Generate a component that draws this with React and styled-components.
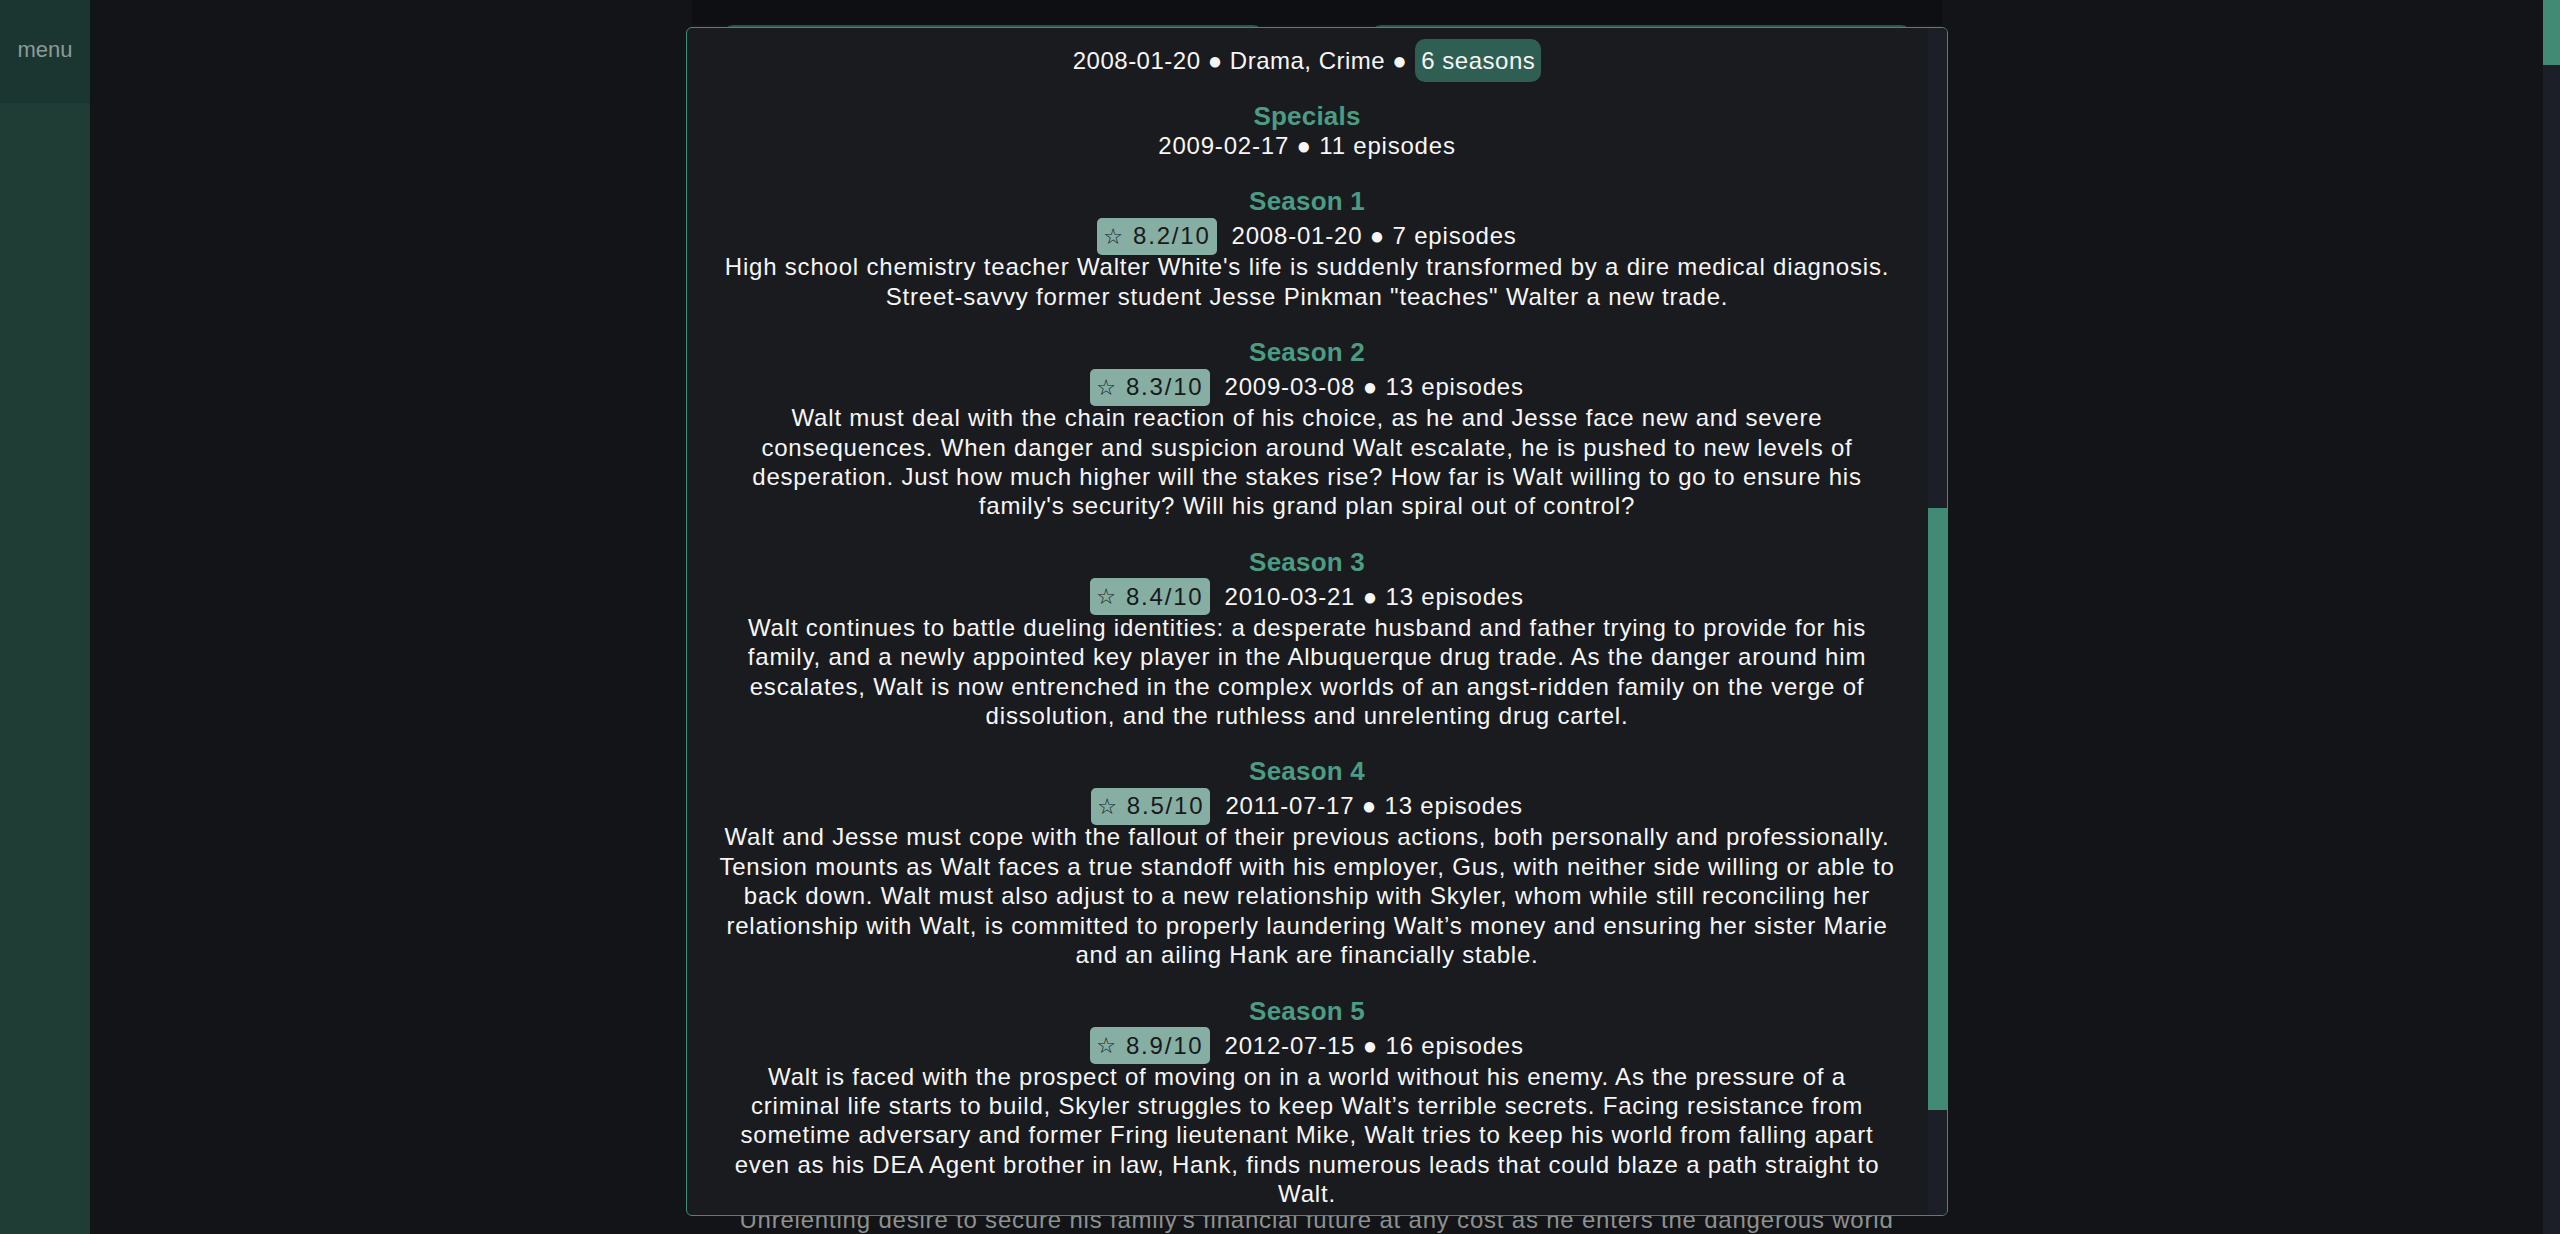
import React from 'react';
import styled, { createGlobalStyle } from 'styled-components';

const FONT = `"Century Gothic", "Liberation Sans", Arial, "DejaVu Sans", sans-serif`;

const GlobalStyle = createGlobalStyle`
  html, body {
    margin: 0;
    padding: 0;
    height: 100%;
    overflow: hidden;
    background: #131418;
    font-family: ${FONT};
    color: #f4f4f4;
  }
  #root {
    height: 100%;
  }
`;

const Page = styled.div`
  display: flex;
  height: 100vh;
`;

const Sidebar = styled.nav`
  width: 90px;
  flex-shrink: 0;
  background: #1f3c35;
  display: flex;
  flex-direction: column;
`;

const MenuButton = styled.div`
  height: 103px;
  box-sizing: border-box;
  padding-top: 39px;
  background: #1b3630;
  color: #8c9b98;
  font-size: 22px;
  line-height: 22px;
  text-align: center;
`;

const Main = styled.main`
  flex: 1;
  display: flex;
  justify-content: center;
  overflow: hidden;
`;

const BackdropColumn = styled.div`
  width: 1250px;
  display: flex;
  flex-direction: column;
`;

const TopStrip = styled.div`
  height: 25px;
  background: #0e0f12;
`;

const PosterRow = styled.div`
  height: 1181px;
  display: flex;
  justify-content: center;
  gap: 108px;
`;

const Poster = styled.div`
  width: 540px;
  background: #1c332d;
  border-top: 2px solid #2b5549;
  border-radius: 10px 10px 0 0;
`;

const Overview = styled.p`
  margin: 0;
  color: #8d918f;
  font-size: 24px;
  line-height: 29.4px;
  letter-spacing: 0.8px;
  text-align: center;
  white-space: nowrap;
`;

const PageScroll = styled.div`
  width: 17px;
  flex-shrink: 0;
  background: #1c1f27;
`;

const PageThumb = styled.div`
  height: 65px;
  background: #428a74;
`;

const Overlay = styled.div`
  position: fixed;
  top: 27px;
  left: 90px;
  right: 17px;
  display: flex;
  justify-content: center;
`;

const Modal = styled.section`
  width: 1262px;
  height: 1189px;
  box-sizing: border-box;
  border: 1px solid #3f8d74;
  border-radius: 6px;
  background: #1a1b1f;
  display: flex;
  overflow: hidden;
`;

const ModalBody = styled.div`
  flex: 1;
  overflow: hidden;
  padding: 11px 26px 0;
  display: flex;
  flex-direction: column;
  align-items: center;
  text-align: center;
  font-size: 24px;
  letter-spacing: 0.8px;
  color: #f6f6f6;
`;

const ScrollTrack = styled.div`
  width: 19px;
  flex-shrink: 0;
  background: #1c1f27;
`;

const ScrollThumb = styled.div`
  margin-top: 480px;
  height: 602px;
  background: #428a74;
`;

const ShowMeta = styled.div`
  height: 43px;
  display: flex;
  align-items: center;
  gap: 8px;
  line-height: 29.4px;
  letter-spacing: 0.5px;
`;

const SeasonsPill = styled.span`
  height: 43px;
  line-height: 43px;
  padding: 0 6px;
  border-radius: 10px;
  background: #2f5f52;
  color: #f6f6f6;
`;

const SeasonList = styled.div`
  margin-top: 19px;
  display: flex;
  flex-direction: column;
  gap: 26px;
  width: 100%;
`;

const Season = styled.article`
  display: flex;
  flex-direction: column;
  align-items: center;
`;

const SeasonTitle = styled.h3`
  margin: 0;
  color: #4c9c84;
  font-size: 26px;
  font-weight: 700;
  line-height: 30px;
  letter-spacing: 0.2px;
`;

const SeasonMeta = styled.div`
  line-height: 29.4px;
`;

const RatingRow = styled.div`
  margin-top: 4px;
  height: 32px;
  display: flex;
  align-items: center;
  gap: 15px;
`;

const Rating = styled.span`
  height: 37px;
  padding: 0 6px;
  border-radius: 5px;
  background: #86aea3;
  color: #17191b;
  display: flex;
  align-items: center;
  gap: 10px;
  letter-spacing: 1.8px;
`;

const Star = styled.span`
  font-family: "DejaVu Sans", sans-serif;
  font-size: 22px;
  letter-spacing: 0;
`;

const Description = styled.p`
  margin: 0;
  line-height: 29.4px;
  white-space: pre;
`;

const seasons = [
  {
    name: 'Season 1',
    rating: '8.2/10',
    date: '2008-01-20',
    episodes: 7,
    lines: [
      "High school chemistry teacher Walter White's life is suddenly transformed by a dire medical diagnosis.",
      'Street-savvy former student Jesse Pinkman "teaches" Walter a new trade.',
    ],
  },
  {
    name: 'Season 2',
    rating: '8.3/10',
    date: '2009-03-08',
    episodes: 13,
    lines: [
      'Walt must deal with the chain reaction of his choice, as he and Jesse face new and severe',
      'consequences. When danger and suspicion around Walt escalate, he is pushed to new levels of',
      'desperation. Just how much higher will the stakes rise? How far is Walt willing to go to ensure his',
      "family's security? Will his grand plan spiral out of control?",
    ],
  },
  {
    name: 'Season 3',
    rating: '8.4/10',
    date: '2010-03-21',
    episodes: 13,
    lines: [
      'Walt continues to battle dueling identities: a desperate husband and father trying to provide for his',
      'family, and a newly appointed key player in the Albuquerque drug trade. As the danger around him',
      'escalates, Walt is now entrenched in the complex worlds of an angst-ridden family on the verge of',
      'dissolution, and the ruthless and unrelenting drug cartel.',
    ],
  },
  {
    name: 'Season 4',
    rating: '8.5/10',
    date: '2011-07-17',
    episodes: 13,
    lines: [
      'Walt and Jesse must cope with the fallout of their previous actions, both personally and professionally.',
      'Tension mounts as Walt faces a true standoff with his employer, Gus, with neither side willing or able to',
      'back down. Walt must also adjust to a new relationship with Skyler, whom while still reconciling her',
      'relationship with Walt, is committed to properly laundering Walt\u2019s money and ensuring her sister Marie',
      'and an ailing Hank are financially stable.',
    ],
  },
  {
    name: 'Season 5',
    rating: '8.9/10',
    date: '2012-07-15',
    episodes: 16,
    lines: [
      'Walt is faced with the prospect of moving on in a world without his enemy. As the pressure of a',
      'criminal life starts to build, Skyler struggles to keep Walt\u2019s terrible secrets. Facing resistance from',
      'sometime adversary and former Fring lieutenant Mike, Walt tries to keep his world from falling apart',
      'even as his DEA Agent brother in law, Hank, finds numerous leads that could blaze a path straight to',
      'Walt.',
    ],
  },
];

const SeasonBlock = ({ name, rating, date, episodes, lines }) => (
  <Season>
    <SeasonTitle>{name}</SeasonTitle>
    <RatingRow>
      <Rating>
        <Star>☆</Star>
        {rating}
      </Rating>
      <span>{date} ● {episodes} episodes</span>
    </RatingRow>
    <Description>{lines.join('\n')}</Description>
  </Season>
);

const App = () => {
  return (
    <>
      <GlobalStyle />
      <Page>
        <Sidebar>
          <MenuButton>menu</MenuButton>
        </Sidebar>
        <Main>
          <BackdropColumn>
            <TopStrip />
            <PosterRow>
              <Poster />
              <Poster />
            </PosterRow>
            <Overview>
              Unrelenting desire to secure his family's financial future at any cost as he enters the dangerous world
            </Overview>
          </BackdropColumn>
        </Main>
        <PageScroll>
          <PageThumb />
        </PageScroll>
      </Page>
      <Overlay>
        <Modal>
          <ModalBody>
            <ShowMeta>
              <span>2008-01-20 ● Drama, Crime ●</span>
              <SeasonsPill>6 seasons</SeasonsPill>
            </ShowMeta>
            <SeasonList>
              <Season>
                <SeasonTitle>Specials</SeasonTitle>
                <SeasonMeta>2009-02-17 ● 11 episodes</SeasonMeta>
              </Season>
              {seasons.map((s) => (
                <SeasonBlock key={s.name} {...s} />
              ))}
            </SeasonList>
          </ModalBody>
          <ScrollTrack>
            <ScrollThumb />
          </ScrollTrack>
        </Modal>
      </Overlay>
    </>
  );
};

export default App;
